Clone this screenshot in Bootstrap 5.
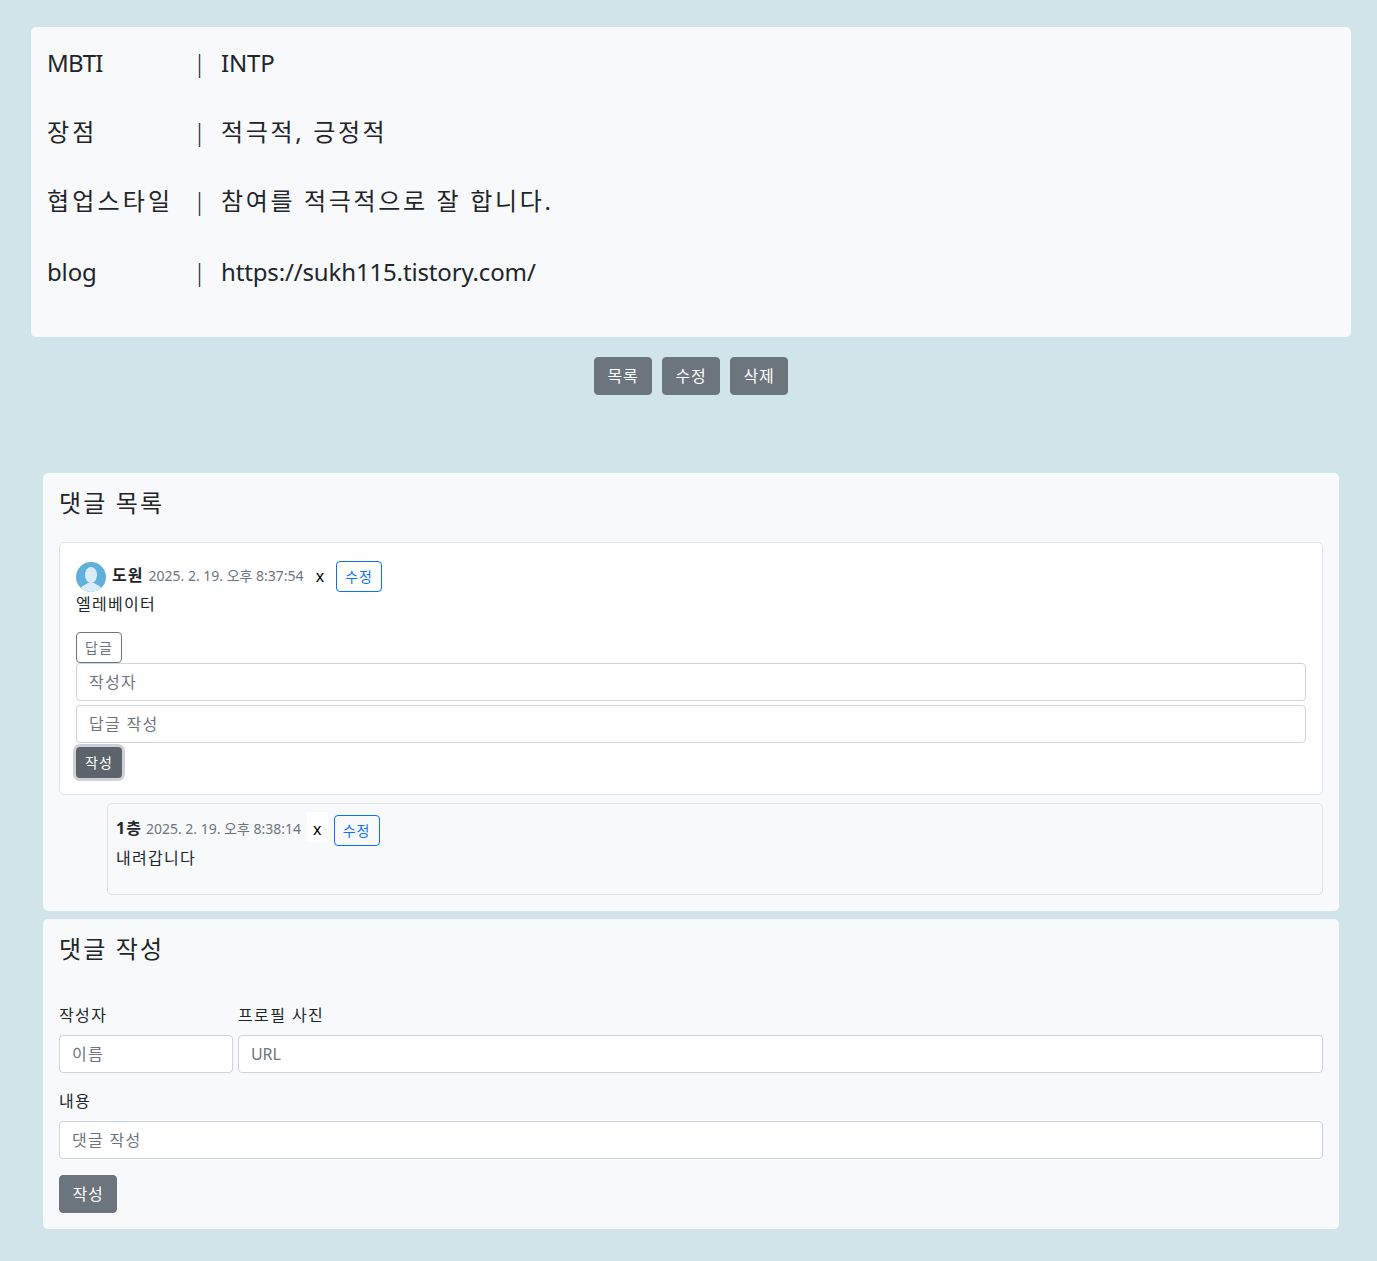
<!DOCTYPE html>
<html lang="ko"><head><meta charset="utf-8"><title>소개</title>
<link href="https://cdn.jsdelivr.net/npm/bootstrap@5.3.0/dist/css/bootstrap.min.css" rel="stylesheet">
<style>
body{background:#d1e4ea;font-family:"Noto Sans","Noto Sans CJK KR",sans-serif;font-size:16px;color:#212529;height:1261px;overflow:hidden}
.page-wrap{padding:27px 26px 0 31px}
.intro-box{height:310px;background:#f8f9fa;border-radius:5px;padding:18px 16px 16px;font-size:24px;line-height:36px}
.intro-row{display:flex;height:36px;margin-bottom:33px}
.intro-row.tall{margin-bottom:35px}
.intro-key{width:146px}.intro-sep{width:28px;font-weight:300}
.ko-lg{letter-spacing:2.65px}
.ko-key{letter-spacing:3.2px}
.en-lg{letter-spacing:-.15px}
.en-tight{letter-spacing:-.8px}
.btn{border-radius:4px}
.form-control{border-radius:4px;border-color:#ced4da;height:38px}
.form-control::placeholder{color:#6c757d;letter-spacing:1.3px}
.action-bar{margin:20px 0 78px;height:38px;gap:10px}
.action-bar .btn,.write-btn{width:58px;height:38px;padding:0;line-height:36px;letter-spacing:.7px}
.sheet{margin:0 12px 8px;background:#f8f9fa;border-radius:5px;padding:16px}
.sheet-list{height:438px}.sheet-form{height:310px}
.sheet-title{font-size:24px;line-height:28px;margin:0 0 25px;font-weight:400;height:28px;letter-spacing:2.1px}
.cmt-main{height:253px;background:#fff;border:1px solid #dee2e6;border-radius:5px;padding:16px;margin-bottom:8px}
.cmt-head{display:flex;align-items:center;height:31px;margin-top:2px}
.avatar{width:30px;height:30px;margin:0 6px 0 0;flex:none}
.cmt-name{font-weight:700;font-size:16px;letter-spacing:1px;margin:0 5px 4px 0}
.cmt-date{font-size:14px;color:#6c757d;margin:0 6px 2px 0}
.del-x{background:#fff;font-size:16px;padding:0 6px;line-height:30px;height:30px;margin:0 6px 0 0;color:#000}
.cmt-main .del-x{line-height:28px}
.mini-btn{width:46px;height:31px;padding:0;font-size:14px;line-height:29px;letter-spacing:1px}
.cmt-text{height:24px;line-height:24px;margin-top:0;font-size:16px;letter-spacing:1.25px}
.reply-btn{display:block;margin-top:16px}
.cmt-input{height:38px;margin-bottom:4px}
.focus-btn{width:46px;height:31px;padding:0;font-size:14px;line-height:29px;letter-spacing:1px;background:#5c636a;box-shadow:0 0 0 3px #ced0d3;color:#fff;display:block;margin:4px 0 0;border-radius:4px}
.cmt-sub{height:92px;margin-left:48px;background:#f8f9fa;border:1px solid #dee2e6;border-radius:5px;padding:8px}
.cmt-sub .cmt-head{margin:3px 0 0;align-items:flex-start}
.cmt-sub .del-x{margin-top:-3px;line-height:34px}
.cmt-sub .cmt-name{margin:0 4px 0 0;line-height:26px}
.cmt-sub .cmt-date{margin:1px 6px 0 0;line-height:26px}
.cmt-sub .cmt-text{margin-top:0;height:24px;line-height:24px}
.form-lab{font-size:16px;line-height:24px;margin-bottom:8px;display:block;letter-spacing:1.4px}
.name-col{width:174px;flex:none}
.form-grid{display:flex;gap:5px;margin-top:0}
.sheet-form .sheet-title{margin-bottom:40px}
.url-col{flex:1}
.url-col .form-control::placeholder{letter-spacing:-.1px}
.form-block{margin-top:16px}
</style></head><body>
<div class="page-wrap">
<div class="intro-box">
<div class="intro-row"><span class="intro-key en-tight">MBTI</span><span class="intro-sep">|</span><span class="en-lg">INTP</span></div>
<div class="intro-row"><span class="intro-key ko-key">장점</span><span class="intro-sep">|</span><span class="ko-lg">적극적, 긍정적</span></div>
<div class="intro-row tall"><span class="intro-key ko-key">협업스타일</span><span class="intro-sep">|</span><span class="ko-lg">참여를 적극적으로 잘 합니다.</span></div>
<div class="intro-row"><span class="intro-key en-lg">blog</span><span class="intro-sep">|</span><span class="en-lg">https://sukh115.tistory.com/</span></div>
</div>
<div class="action-bar d-flex justify-content-center">
<a class="btn btn-secondary">목록</a><a class="btn btn-secondary">수정</a><a class="btn btn-secondary">삭제</a>
</div>
<div class="sheet sheet-list">
<h4 class="sheet-title">댓글 목록</h4>
<div class="cmt-main">
<div class="cmt-head">
<svg class="avatar" viewBox="0 0 30 30"><defs><clipPath id="c"><circle cx="15" cy="15" r="15"/></clipPath></defs><circle cx="15" cy="15" r="15" fill="#5fb0da"/><g clip-path="url(#c)"><ellipse cx="15" cy="13" rx="6" ry="8" fill="#d9ecf7"/><path d="M3 30c1-6 6-7 9-9h6c3 2 8 3 9 9z" fill="#d9ecf7"/></g></svg>
<span class="cmt-name">도원</span><span class="cmt-date">2025. 2. 19. 오후 8:37:54</span><span class="del-x">x</span>
<button class="btn btn-outline-primary mini-btn">수정</button></div>
<div class="cmt-text">엘레베이터</div>
<button class="btn btn-outline-secondary mini-btn reply-btn">답글</button>
<input class="form-control cmt-input" placeholder="작성자">
<input class="form-control cmt-input" placeholder="답글 작성">
<button class="btn focus-btn">작성</button>
</div>
<div class="cmt-sub">
<div class="cmt-head"><span class="cmt-name">1층</span><span class="cmt-date">2025. 2. 19. 오후 8:38:14</span><span class="del-x">x</span><button class="btn btn-outline-primary mini-btn">수정</button></div>
<div class="cmt-text">내려갑니다</div>
</div>
</div>
<div class="sheet sheet-form">
<h4 class="sheet-title">댓글 작성</h4>
<div class="form-grid">
<div class="name-col"><label class="form-lab">작성자</label><input class="form-control" placeholder="이름"></div>
<div class="url-col"><label class="form-lab">프로필 사진</label><input class="form-control" placeholder="URL"></div>
</div>
<div class="form-block"><label class="form-lab">내용</label><input class="form-control" placeholder="댓글 작성"></div>
<button class="btn btn-secondary write-btn form-block">작성</button>
</div>
</div>
<script src="https://cdn.jsdelivr.net/npm/bootstrap@5.3.0/dist/js/bootstrap.bundle.min.js"></script>
</body></html>
